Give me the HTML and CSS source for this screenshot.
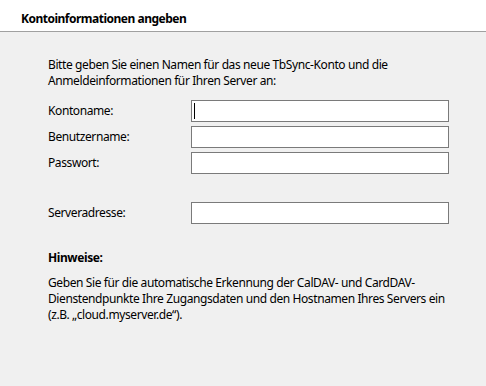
FILE: index.html
```html
<!DOCTYPE html>
<html lang="de">

<head>
    <meta charset="UTF-8">
    <meta name="viewport" content="width=device-width, initial-scale=1">
    <title>Kontoinformationen angeben</title>
    <link rel="stylesheet" href="styles.css">
</head>

<body>
    <div class="page-header">
        <h1>Kontoinformationen angeben</h1>
    </div>

    <div class="content">
        <p class="intro">Bitte geben Sie einen Namen für das neue TbSync-Konto und die Anmeldeinformationen für Ihren Server an:</p>

        <div class="form-group">
            <div class="form-row">
                <label for="accountname">Kontoname:</label>
                <div class="field">
                    <input type="text" id="accountname">
                    <span class="caret"></span>
                </div>
            </div>
            <div class="form-row">
                <label for="username">Benutzername:</label>
                <div class="field">
                    <input type="text" id="username">
                </div>
            </div>
            <div class="form-row">
                <label for="password">Passwort:</label>
                <div class="field">
                    <input type="password" id="password">
                </div>
            </div>
        </div>

        <div class="form-group server-group">
            <div class="form-row">
                <label for="server">Serveradresse:</label>
                <div class="field">
                    <input type="text" id="server">
                </div>
            </div>
        </div>

        <h2 class="hint-title">Hinweise:</h2>
        <p class="hint">Geben Sie für die automatische Erkennung der CalDAV- und CardDAV-Dienstendpunkte Ihre Zugangsdaten und den Hostnamen Ihres Servers ein (z.B. „cloud.myserver.de“).</p>
    </div>
</body>

</html>
```

FILE: styles.css
```css
body {
    font-family: "Noto Sans", "Open Sans", sans-serif;
    font-size: 12px;
    line-height: 16px;
    letter-spacing: -0.4px;
    color: #000;
    background: #f0f0f0;
    margin: 0;
    padding: 0;
}

.page-header {
    background: #fff;
    height: 32px;
    border-bottom: 1px solid #a0a0a0;
    padding-left: 21px;
    box-sizing: border-box;
}

.page-header h1 {
    margin: 0;
    padding-top: 11px;
    font-size: 12px;
    line-height: 16px;
    font-weight: bold;
    letter-spacing: -0.5px;
}

.content {
    padding: 25px 37px 0 48px;
}

.intro {
    margin: 0;
    width: 360px;
}

.form-group {
    display: flex;
    flex-direction: column;
    gap: 4px;
    margin-top: 11px;
}

.server-group {
    margin-top: 28px;
}

.form-row {
    display: flex;
    align-items: center;
}

label {
    width: 143px;
}

.field {
    position: relative;
}

input {
    display: block;
    width: 258px;
    height: 22px;
    box-sizing: border-box;
    border: 1px solid #7a7a7a;
    background: #fff;
    margin: 0;
    padding: 0 3px;
    outline: none;
    font: inherit;
}

.caret {
    position: absolute;
    left: 3px;
    top: 3px;
    width: 1px;
    height: 16px;
    background: #000;
}

.hint-title {
    margin: 26px 0 0;
    font-size: 12px;
    line-height: 16px;
    font-weight: bold;
}

.hint {
    margin: 9px 0 0;
    width: 400px;
}
```
